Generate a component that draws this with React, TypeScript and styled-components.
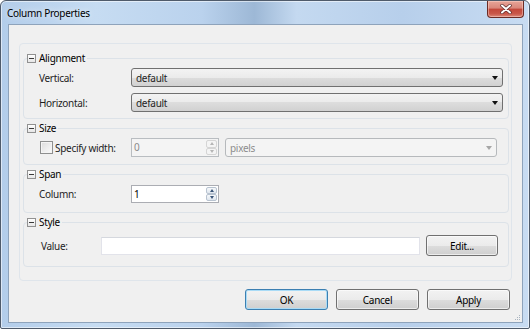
import styled, { createGlobalStyle } from 'styled-components';

const GlobalStyle = createGlobalStyle`
  html, body {
    margin: 0;
    padding: 0;
    background: #ffffff;
  }
  body {
    font-family: "Noto Sans", "Open Sans", sans-serif;
    font-size: 10px;
    letter-spacing: -0.3px;
    color: #1e1e1e;
  }
  * { box-sizing: border-box; }
`;

function App() {
  return (
    <>
      <GlobalStyle />
      <Window>
        <TitleBar>
          <Title>Column Properties</Title>
          <CloseButton aria-label="Close">
            <svg width="12" height="10" viewBox="0 0 12 10">
              <path d="M2 1.5 L10 8.5 M10 1.5 L2 8.5" stroke="#5a2a2a" strokeWidth="3.4" strokeLinecap="round" />
              <path d="M2 1.5 L10 8.5 M10 1.5 L2 8.5" stroke="#ffffff" strokeWidth="2" strokeLinecap="round" />
            </svg>
          </CloseButton>
        </TitleBar>
        <Client>
          <Panel>
            <Group>
              <Legend><Toggle />Alignment</Legend>
              <Rows $right={5} $top={3} $bottom={6}>
                <Row>
                  <Label>Vertical:</Label>
                  <Select>default<Arrow /></Select>
                </Row>
                <Row>
                  <Label>Horizontal:</Label>
                  <Select>default<Arrow /></Select>
                </Row>
              </Rows>
            </Group>

            <Group>
              <Legend><Toggle />Size</Legend>
              <Rows $right={11} $top={3} $bottom={7}>
                <Row>
                  <CheckLabel><Checkbox />Specify width:</CheckLabel>
                  <Inline>
                    <NumberBox $disabled>
                      <NumberText $disabled>0</NumberText>
                      <Spin>
                        <SpinButton $disabled><Tri $up $disabled /></SpinButton>
                        <SpinButton $disabled><Tri $disabled /></SpinButton>
                      </Spin>
                    </NumberBox>
                    <Select $disabled>pixels<Arrow $disabled /></Select>
                  </Inline>
                </Row>
              </Rows>
            </Group>

            <Group>
              <Legend><Toggle />Span</Legend>
              <Rows $right={11} $top={4} $bottom={9}>
                <Row>
                  <Label>Column:</Label>
                  <Inline>
                    <NumberBox $height={18}>
                      <NumberText>1</NumberText>
                      <Spin>
                        <SpinButton><Tri $up /></SpinButton>
                        <SpinButton><Tri /></SpinButton>
                      </Spin>
                    </NumberBox>
                  </Inline>
                </Row>
              </Rows>
            </Group>

            <Group>
              <Legend><Toggle />Style</Legend>
              <Rows $right={10} $label={62} $top={6} $bottom={10}>
                <Row>
                  <Label $indent={2}>Value:</Label>
                  <Inline>
                    <TextField />
                    <Button $width={72}>Edit...</Button>
                  </Inline>
                </Row>
              </Rows>
            </Group>
          </Panel>

          <Footer>
            <Button $default>OK</Button>
            <Button>Cancel</Button>
            <Button>Apply</Button>
          </Footer>
          <Grip width="6" height="6" viewBox="0 0 6 6">
            <rect x="4" y="0" width="1" height="1" fill="#a9b4c0" />
            <rect x="2" y="2" width="1" height="1" fill="#a9b4c0" />
            <rect x="4" y="2" width="1" height="1" fill="#a9b4c0" />
            <rect x="0" y="4" width="1" height="1" fill="#a9b4c0" />
            <rect x="2" y="4" width="1" height="1" fill="#a9b4c0" />
            <rect x="4" y="4" width="1" height="1" fill="#a9b4c0" />
          </Grip>
        </Client>
      </Window>
    </>
  );
}

const Window = styled.div`
  width: 530px;
  height: 329px;
  border: 1px solid #4f5b6b;
  border-radius: 6px 6px 2px 2px;
  background: linear-gradient(90deg, #b3cdea 0%, #c6dcf2 18%, #bad2ed 38%, #9db8d6 48%, #c4d9f0 56%, #b7cfeb 76%, #c8dcf2 100%);
  box-shadow: inset 0 0 0 1px rgba(255, 255, 255, 0.55);
  display: flex;
  flex-direction: column;
`;

const TitleBar = styled.div`
  height: 23px;
  display: flex;
  justify-content: space-between;
  align-items: flex-start;
`;

const Title = styled.div`
  padding: 5px 0 0 6px;
  font-size: 10px;
  color: #000;
  text-shadow: 0 0 6px rgba(255, 255, 255, 0.9);
`;

const CloseButton = styled.div`
  width: 37px;
  height: 17px;
  margin-right: 5px;
  border: 1px solid #6b2b25;
  border-top: none;
  border-radius: 0 0 4px 4px;
  background: linear-gradient(180deg, #e7a598 0%, #d9867a 45%, #c3473a 50%, #c9584a 80%, #dc8a7b 100%);
  box-shadow: inset 0 0 0 1px rgba(255, 220, 210, 0.45);
  display: flex;
  align-items: center;
  justify-content: center;
`;

const Client = styled.div`
  position: relative;
  flex: 1;
  margin: 0 6px 5px 7px;
  border: 1px solid #8ea3bb;
  background: #f0f0f0;
  display: flex;
  flex-direction: column;
`;

const Grip = styled.svg`
  position: absolute;
  right: 1px;
  bottom: 1px;
`;

const Panel = styled.div`
  margin: 18px 10px 0 10px;
  border: 1px solid #dfe5eb;
  border-radius: 4px;
  padding: 8px 2px 13px 3px;
  display: flex;
  flex-direction: column;
  gap: 3px;
`;

const Group = styled.fieldset`
  margin: 0;
  padding: 0;
  min-width: 0;
  border: 1px solid #dce2e8;
  border-radius: 4px;
`;

const Legend = styled.legend`
  margin-left: 3px;
  padding: 0 2px 0 0;
  height: 13px;
  line-height: 13px;
  display: flex;
  align-items: center;
  gap: 3px;
  color: #000;
`;

const Toggle = styled.span`
  position: relative;
  width: 9px;
  height: 9px;
  border: 1px solid #919191;
  background: linear-gradient(180deg, #ffffff, #e6e6e6);
  &::after {
    content: '';
    position: absolute;
    left: 1px;
    top: 3px;
    width: 5px;
    height: 1px;
    background: #3a3a3a;
  }
`;

const Rows = styled.div<{ $right: number; $label?: number; $top: number; $bottom: number }>`
  display: grid;
  grid-template-columns: ${(p) => p.$label ?? 92}px 1fr;
  row-gap: 6px;
  align-items: center;
  padding: ${(p) => p.$top}px ${(p) => p.$right}px ${(p) => p.$bottom}px 15px;
`;

const Row = styled.div`
  display: contents;
`;

const Label = styled.span<{ $indent?: number }>`
  padding-left: ${(p) => p.$indent ?? 0}px;
  color: #1e1e1e;
`;

const CheckLabel = styled.span`
  display: flex;
  align-items: center;
  gap: 2px;
`;

const Checkbox = styled.span`
  width: 13px;
  height: 13px;
  margin-left: 1px;
  border: 1px solid #8e8f8f;
  background: linear-gradient(135deg, #dcdcdc, #fbfbfb);
  box-shadow: inset 0 0 0 1px #f4f4f4;
`;

const Inline = styled.div`
  display: flex;
  align-items: center;
  gap: 6px;
`;

const Select = styled.div<{ $disabled?: boolean }>`
  flex: 1;
  height: 19px;
  padding: 0 0 0 4px;
  display: flex;
  align-items: center;
  justify-content: space-between;
  border: 1px solid ${(p) => (p.$disabled ? '#b6b9bc' : '#707070')};
  border-radius: 3px;
  color: ${(p) => (p.$disabled ? '#8d8d8d' : '#1e1e1e')};
  background: ${(p) =>
    p.$disabled
      ? '#f4f4f4'
      : 'linear-gradient(180deg, #f3f3f3 0%, #ebebeb 50%, #dddddd 50%, #d1d1d1 100%)'};
`;

const Arrow = styled.span<{ $disabled?: boolean }>`
  width: 0;
  height: 0;
  margin-right: 4px;
  border-left: 3.5px solid transparent;
  border-right: 3.5px solid transparent;
  border-top: 4px solid ${(p) => (p.$disabled ? '#a6a6a6' : '#111')};
`;

const NumberBox = styled.div<{ $disabled?: boolean; $height?: number }>`
  width: 88px;
  height: ${(p) => p.$height ?? 19}px;
  display: flex;
  border: 1px solid ${(p) => (p.$disabled ? '#b9bdc1' : '#abadb3')};
  background: ${(p) => (p.$disabled ? '#f4f4f4' : '#ffffff')};
`;

const NumberText = styled.span<{ $disabled?: boolean }>`
  flex: 1;
  padding-left: 2px;
  line-height: 16px;
  color: ${(p) => (p.$disabled ? '#8a8a8a' : '#000')};
`;

const Spin = styled.div`
  width: 12px;
  padding: 1px 1px 1px 0;
  display: flex;
  flex-direction: column;
`;

const SpinButton = styled.div<{ $disabled?: boolean }>`
  flex: 1;
  display: flex;
  align-items: center;
  justify-content: center;
  border: 1px solid ${(p) => (p.$disabled ? '#d5d5d5' : '#b8c3d0')};
  border-radius: 2px;
  background: ${(p) =>
    p.$disabled ? '#f4f4f4' : 'linear-gradient(180deg, #f7f9fb, #dfe6ee)'};
`;

const Tri = styled.span<{ $up?: boolean; $disabled?: boolean }>`
  width: 0;
  height: 0;
  border-left: 2.5px solid transparent;
  border-right: 2.5px solid transparent;
  ${(p) => (p.$up ? 'border-bottom' : 'border-top')}: 3px solid
    ${(p) => (p.$disabled ? '#b5b5b5' : '#3b5578')};
`;

const TextField = styled.input`
  flex: 1;
  height: 18px;
  min-width: 0;
  margin: 0;
  border: 1px solid #e2e3ea;
  border-top-color: #d5d8de;
  background: #fff;
  outline: none;
`;

const Button = styled.button<{ $width?: number; $default?: boolean }>`
  width: ${(p) => p.$width ?? 83}px;
  height: 21px;
  margin: 0;
  padding: 0;
  font-family: inherit;
  font-size: 10px;
  letter-spacing: inherit;
  color: #000;
  border: 1px solid ${(p) => (p.$default ? '#3c7fb1' : '#707070')};
  border-radius: 3px;
  background: linear-gradient(180deg, #f2f2f2 0%, #ebebeb 50%, #dddddd 50%, #cfcfcf 100%);
  box-shadow: ${(p) =>
    p.$default ? 'inset 0 0 0 1px #a9dbf6' : 'inset 0 0 0 1px rgba(255, 255, 255, 0.6)'};
`;

const Footer = styled.div`
  display: flex;
  justify-content: flex-end;
  gap: 8px;
  margin: 8px 12px 0 0;
`;

export default App;
